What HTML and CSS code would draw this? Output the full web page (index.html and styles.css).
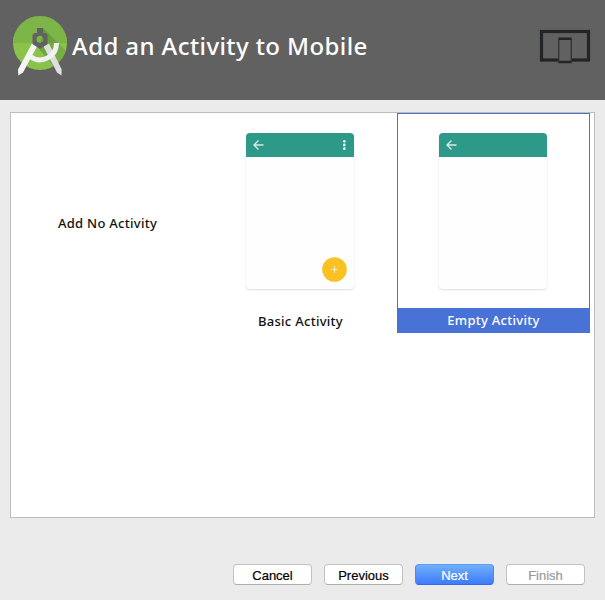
FILE: index.html
```html
<!DOCTYPE html>
<html lang="en">
<head>
<meta charset="utf-8">
<title>Add an Activity to Mobile</title>
<link rel="stylesheet" href="styles.css">
</head>
<body>
<header class="header">
  <svg class="logo" width="56" height="64" viewBox="12 14 56 64">
    <defs>
      <clipPath id="disc"><circle cx="40" cy="43" r="27"/></clipPath>
      <linearGradient id="shade" x1="0" y1="0" x2="1" y2="1"><stop offset="0" stop-color="#4d8535"/><stop offset="1" stop-color="#7ab145"/></linearGradient>
    </defs>
    <g clip-path="url(#disc)">
      <rect x="12" y="14" width="56" height="29" fill="#7db548"/>
      <rect x="12" y="43" width="56" height="30" fill="#8bc34a"/>
      <path d="M43 28L70 55L62 77L40 50Z" fill="url(#shade)" opacity=".6"/>
      <path d="M13 42a27 26.5 0 0 1 54 0" fill="none" stroke="#8dc256" stroke-width="1"/>
    </g>
    <path d="M43.500 46.500L49 43.500L61.700 69.500L61.500 75.500L57 72.500Z" fill="#dedede"/>
    <path d="M56.500 43a16.500 16.500 0 0 1-26 13.800" fill="none" stroke="#f1f1f1" stroke-width="5"/>
    <path d="M32 43.500L37 46.500L23 72.500L18.300 75.500L18 69.500Z" fill="#f5f5f5"/>
    <path fill-rule="evenodd" d="M37 28h6v5h2.500l2 2v9l-7.500 5l-7.500-5v-9l2-2H37zM40 35.700a3.500 3.500 0 1 0 0 7a3.500 3.500 0 1 0 0-7z" fill="#616161"/>
  </svg>
  <h1 class="title">Add an Activity to Mobile</h1>
  <svg class="devices" width="52" height="36" viewBox="539 29 52 36">
    <rect x="541.500" y="31.500" width="47" height="28.500" fill="none" stroke="#222525" stroke-width="3.200"/>
    <rect x="558" y="37.500" width="14" height="26" rx="1.500" fill="#616161"/>
    <path d="M558.700 39v23M571.300 39v23" stroke="#333636" stroke-width="1.400"/>
    <path d="M558.500 38.700h13M558.500 62h13" stroke="#222525" stroke-width="2.400"/>
  </svg>
</header>
<main class="gallery">
  <div class="cell cell-none"><span class="label">Add No Activity</span></div>
  <div class="cell">
    <div class="phone">
      <div class="bar">
        <svg width="108" height="24" viewBox="0 0 108 24"><path d="M8 12h9.500M12.500 7.500L8 12l4.500 4.500" fill="none" stroke="#d5ebe8" stroke-width="1.400"/><g fill="#e4f3f1"><circle cx="98.300" cy="8.300" r="1.400"/><circle cx="98.300" cy="12" r="1.400"/><circle cx="98.300" cy="15.700" r="1.400"/></g></svg>
      </div>
      <svg class="fab" width="25" height="25" viewBox="0 0 25 25"><circle cx="12.500" cy="12.500" r="12.300" fill="#f9c222"/><path d="M9.300 12.500h6.400M12.500 9.300v6.400" stroke="#fdedbd" stroke-width="1.200"/></svg>
    </div>
    <span class="label label-basic">Basic Activity</span>
  </div>
  <div class="cell selected">
    <div class="phone">
      <div class="bar">
        <svg width="108" height="24" viewBox="0 0 108 24"><path d="M8 12h9.500M12.500 7.500L8 12l4.500 4.500" fill="none" stroke="#d5ebe8" stroke-width="1.400"/></svg>
      </div>
    </div>
    <span class="label label-empty">Empty Activity</span>
  </div>
</main>
<footer class="buttons">
  <button class="btn">Cancel</button>
  <button class="btn">Previous</button>
  <button class="btn primary">Next</button>
  <button class="btn" disabled>Finish</button>
</footer>
</body>
</html>
```
FILE: styles.css
```css
* { box-sizing: border-box; }
body {
  margin: 0;
  height: 600px;
  overflow: hidden;
  background: #ebebeb;
  font-family: "Noto Sans", "Open Sans", sans-serif;
}
.header {
  display: flex;
  align-items: flex-start;
  height: 100px;
  padding: 14px 14px 0 12px;
  background: #616161;
}
.title {
  margin: 14px 0 0 4px;
  font-size: 24px;
  line-height: 36px;
  font-weight: 500;
  letter-spacing: 0.41px;
  color: #fff;
  white-space: nowrap;
}
.devices { margin: 15px 0 0 auto; }
.gallery {
  display: grid;
  grid-template-columns: repeat(3, 193px);
  align-items: start;
  width: 585px;
  height: 406px;
  margin: 12px 0 0 10px;
  background: #fff;
  border: 1px solid #bdbdbd;
}
.cell {
  display: flex;
  flex-direction: column;
  align-items: center;
  height: 220px;
  padding-top: 20px;
  border: 0 solid #4972d6;
}
.cell-none { justify-content: center; padding-top: 0; }
.selected { border-width: 1px 1px 0; padding-top: 19px; }
.phone {
  display: flex;
  flex-direction: column;
  justify-content: space-between;
  width: 108px;
  height: 156px;
  margin-right: 1px;
  border-radius: 4px;
  background: #fefefe;
  box-shadow: 0 1px 2px rgba(0, 0, 0, 0.14);
}
.bar {
  height: 24px;
  border-radius: 4px 4px 0 0;
  background: #2c9989;
}
.bar svg { display: block; }
.fab { align-self: flex-end; margin: 0 7px 7px 0; }
.label {
  font-size: 13px;
  line-height: 20px;
  font-weight: 500;
  letter-spacing: 0.28px;
  color: #111;
  white-space: nowrap;
}
.label-basic { margin-top: 22px; }
.label-empty {
  width: 193px;
  margin-top: 19px;
  line-height: 25px;
  text-align: center;
  color: #fff;
  background: #4972d6;
}
.buttons {
  display: flex;
  justify-content: flex-end;
  gap: 12px;
  padding: 46px 20px 0 0;
}
.btn {
  width: 79px;
  height: 21px;
  padding: 2px 0 0;
  border: 1px solid #c2c2c2;
  border-bottom-color: #adadad;
  border-radius: 4px;
  background: #fff;
  font: 13px/18px "Liberation Sans", Arial, sans-serif;
  color: #000;
  -webkit-text-stroke: 0.2px currentColor;
}
.primary {
  border-color: #5d9df5 #4a86f5 #3768ee;
  background: linear-gradient(#70affb, #3c7bfb);
  color: #fff;
}
.btn:disabled { color: #999; }
```
